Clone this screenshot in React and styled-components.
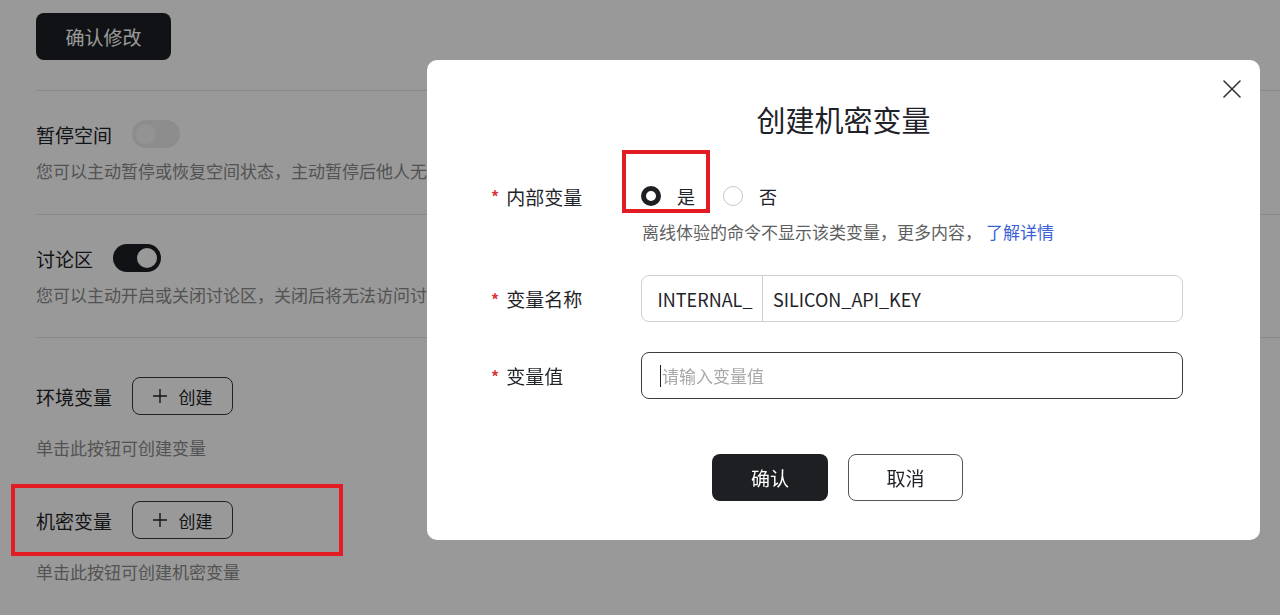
import React from 'react';
import styled, { createGlobalStyle } from 'styled-components';

const GlobalStyle = createGlobalStyle`
  html, body {
    margin: 0;
    padding: 0;
    background: #ffffff;
    font-family: "Noto Sans CJK SC", "Noto Sans", sans-serif;
    color: #1f2329;
    overflow: hidden;
  }
  * { box-sizing: border-box; }
`;

const Page = styled.div`
  padding: 13px 0 0 36px;
  width: 1280px;
  height: 615px;
`;

const DarkButton = styled.button`
  height: 47px;
  width: ${(p) => p.$width || 135}px;
  border: none;
  border-radius: 8px;
  background: #1d1f23;
  color: #ffffff;
  font-family: inherit;
  font-size: 19px;
  cursor: pointer;
`;

const Divider = styled.div`
  height: 1px;
  background: #e4e4e4;
  margin-top: ${(p) => p.$top}px;
`;

const Section = styled.div`
  padding-top: ${(p) => p.$top}px;
`;

const Row = styled.div`
  display: flex;
  align-items: center;
  gap: 20px;
  height: ${(p) => p.$h || 28}px;
`;

const Label = styled.span`
  font-size: 19px;
  color: #1f2329;
`;

const Desc = styled.div`
  font-size: 17px;
  line-height: 24px;
  color: #8a8a8a;
  margin-top: ${(p) => p.$top}px;
  white-space: nowrap;
`;

const Toggle = styled.div`
  width: 48px;
  height: 28px;
  border-radius: 14px;
  background: ${(p) => (p.$on ? '#1d1f23' : '#ececec')};
  display: flex;
  align-items: center;
  justify-content: ${(p) => (p.$on ? 'flex-end' : 'flex-start')};
  padding: 0 4px;

  &::after {
    content: '';
    width: 20px;
    height: 20px;
    border-radius: 50%;
    background: ${(p) => (p.$on ? '#ffffff' : '#f6f6f6')};
  }
`;

const OutlineButton = styled.button`
  height: 38px;
  width: 101px;
  border: 1px solid #3a3a3a;
  border-radius: 8px;
  background: #ffffff;
  font-family: inherit;
  font-size: 17px;
  color: #1f2329;
  display: flex;
  align-items: center;
  justify-content: center;
  gap: 12px;
  padding: 0;
`;

const Overlay = styled.div`
  position: fixed;
  inset: 0;
  background: rgba(0, 0, 0, 0.4);
`;

const Modal = styled.div`
  position: fixed;
  left: 427px;
  top: 60px;
  width: 833px;
  height: 480px;
  background: #ffffff;
  border-radius: 10px;
  padding: 39px 0 0 64px;
  display: flex;
  flex-direction: column;
`;

const CloseButton = styled.button`
  position: absolute;
  right: 16px;
  top: 17px;
  width: 24px;
  height: 24px;
  border: none;
  background: none;
  padding: 0;
  display: flex;
  align-items: center;
  justify-content: center;
`;

const Title = styled.h2`
  margin: 0;
  font-size: 29px;
  font-weight: 400;
  line-height: 40px;
  text-align: center;
  padding-right: 64px;
  color: #1f2329;
`;

const FormRow = styled.div`
  display: flex;
  align-items: ${(p) => p.$align || 'center'};
  margin-top: ${(p) => p.$top}px;
`;

const FormLabel = styled.div`
  width: 150px;
  flex-shrink: 0;
  display: flex;
  align-items: center;
  gap: 7px;
  font-size: 19px;
  color: #1f2329;

  &::before {
    content: '*';
    color: #d9363e;
    font-size: 16px;
    font-weight: 700;
  }
`;

const FieldColumn = styled.div`
  display: flex;
  flex-direction: column;
`;

const RadioGroup = styled.div`
  display: flex;
  align-items: center;
  height: 34px;
`;

const RadioItem = styled.label`
  display: flex;
  align-items: center;
  gap: 16px;
  font-size: 18px;
  margin-right: 28px;
  color: #1f2329;
`;

const RadioDot = styled.span`
  width: 20px;
  height: 20px;
  border-radius: 50%;
  border: ${(p) => (p.$checked ? '5px solid #1d1f23' : '1px solid #c8c8c8')};
  background: #ffffff;
`;

const Hint = styled.div`
  font-size: 17px;
  line-height: 24px;
  color: #5f5f5f;
  margin-top: 7px;
  margin-left: 1px;
`;

const Link = styled.a`
  color: #3a5fd6;
  margin-left: 4px;
  text-decoration: none;
`;

const InputBox = styled.div`
  width: 542px;
  height: 47px;
  border: 1px solid ${(p) => (p.$focused ? '#3d3d3d' : '#cfcfcf')};
  border-radius: 8px;
  display: flex;
  align-items: stretch;
  overflow: hidden;
  font-size: 18px;
`;

const Prefix = styled.div`
  width: 121px;
  border-right: 1px solid #cfcfcf;
  display: flex;
  align-items: center;
  justify-content: center;
  padding-left: 6px;
  color: #1f2329;
`;

const Field = styled.div`
  flex: 1;
  display: flex;
  align-items: center;
  padding-left: ${(p) => p.$pad}px;
  color: ${(p) => (p.$placeholder ? '#a8a8a8' : '#1f2329')};
  font-size: ${(p) => (p.$placeholder ? 17 : 18)}px;
`;

const Caret = styled.span`
  width: 1px;
  height: 22px;
  background: #1f2329;
  margin-right: 1px;
`;

const Actions = styled.div`
  display: flex;
  justify-content: center;
  gap: 20px;
  margin-top: 55px;
  padding-right: 76px;
`;

const GhostButton = styled.button`
  height: 47px;
  width: 115px;
  border: 1px solid #555555;
  border-radius: 8px;
  background: #ffffff;
  color: #1f2329;
  font-family: inherit;
  font-size: 19px;
`;

const Mark = styled.div`
  position: fixed;
  left: ${(p) => p.$x}px;
  top: ${(p) => p.$y}px;
  width: ${(p) => p.$w}px;
  height: ${(p) => p.$h}px;
  border: 4px solid #e31b23;
  pointer-events: none;
`;

const PlusIcon = () => (
  <svg width="14" height="14" viewBox="0 0 14 14">
    <path d="M7 0v14M0 7h14" stroke="#1f2329" strokeWidth="1.4" />
  </svg>
);

const CloseIcon = () => (
  <svg width="18" height="18" viewBox="0 0 18 18">
    <path d="M1 1l16 16M17 1L1 17" stroke="#333" strokeWidth="1.6" strokeLinecap="round" />
  </svg>
);

export default function App() {
  return (
    <>
      <GlobalStyle />
      <Page>
        <DarkButton>确认修改</DarkButton>
        <Divider $top={30} />

        <Section $top={29}>
          <Row>
            <Label>暂停空间</Label>
            <Toggle />
          </Row>
          <Desc $top={11}>您可以主动暂停或恢复空间状态，主动暂停后他人无法访问该空间，可随时恢复空间运行</Desc>
        </Section>
        <Divider $top={31} />

        <Section $top={29}>
          <Row>
            <Label>讨论区</Label>
            <Toggle $on />
          </Row>
          <Desc $top={11}>您可以主动开启或关闭讨论区，关闭后将无法访问讨论区内容</Desc>
        </Section>
        <Divider $top={30} />

        <Section $top={39}>
          <Row $h={38}>
            <Label>环境变量</Label>
            <OutlineButton><PlusIcon />创建</OutlineButton>
          </Row>
          <Desc $top={21}>单击此按钮可创建变量</Desc>
        </Section>

        <Section $top={41}>
          <Row $h={38}>
            <Label>机密变量</Label>
            <OutlineButton><PlusIcon />创建</OutlineButton>
          </Row>
          <Desc $top={21}>单击此按钮可创建机密变量</Desc>
        </Section>
      </Page>

      <Overlay />
      <Modal>
        <CloseButton><CloseIcon /></CloseButton>
        <Title>创建机密变量</Title>

        <FormRow $top={40} $align="flex-start">
          <FormLabel style={{ height: 34 }}>内部变量</FormLabel>
          <FieldColumn>
            <RadioGroup>
              <RadioItem><RadioDot $checked />是</RadioItem>
              <RadioItem><RadioDot />否</RadioItem>
            </RadioGroup>
            <Hint>离线体验的命令不显示该类变量，更多内容，<Link>了解详情</Link></Hint>
          </FieldColumn>
        </FormRow>

        <FormRow $top={31}>
          <FormLabel>变量名称</FormLabel>
          <InputBox>
            <Prefix>INTERNAL_</Prefix>
            <Field $pad={10}>SILICON_API_KEY</Field>
          </InputBox>
        </FormRow>

        <FormRow $top={30}>
          <FormLabel>变量值</FormLabel>
          <InputBox $focused>
            <Field $pad={18} $placeholder><Caret />请输入变量值</Field>
          </InputBox>
        </FormRow>

        <Actions>
          <DarkButton $width={116}>确认</DarkButton>
          <GhostButton>取消</GhostButton>
        </Actions>
      </Modal>

      <Mark $x={11} $y={484} $w={332} $h={72} />
      <Mark $x={622} $y={150} $w={88} $h={63} />
    </>
  );
}
